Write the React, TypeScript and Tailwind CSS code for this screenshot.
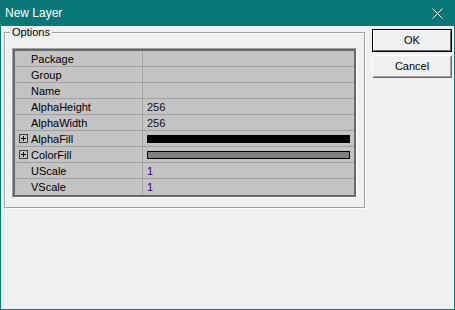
import React from "react";

type Row = { name: string; value?: string; kind?: "text" | "num" | "black" | "gray"; expand?: boolean };

const rows: Row[] = [
  { name: "Package" },
  { name: "Group" },
  { name: "Name" },
  { name: "AlphaHeight", value: "256", kind: "text" },
  { name: "AlphaWidth", value: "256", kind: "text" },
  { name: "AlphaFill", kind: "black", expand: true },
  { name: "ColorFill", kind: "gray", expand: true },
  { name: "UScale", value: "1", kind: "num" },
  { name: "VScale", value: "1", kind: "num" },
];

function PlusBox() {
  return (
    <svg width="9" height="9" viewBox="0 0 9 9" className="block">
      <rect x="0.5" y="0.5" width="8" height="8" fill="none" stroke="#3c3c3c" />
      <line x1="2" y1="4.5" x2="7" y2="4.5" stroke="#000" />
      <line x1="4.5" y1="2" x2="4.5" y2="7" stroke="#000" />
    </svg>
  );
}

export default function App() {
  const font = { fontFamily: '"Liberation Sans", Arial, sans-serif' };
  return (
    <div className="w-[455px] h-[310px] bg-[#077877] px-[1px] pb-[1px] flex flex-col" style={font}>
      <div className="h-[26px] flex items-center pl-[4px] shrink-0">
        <span className="text-white text-[12px] leading-[14px]">New Layer</span>
        <div className="ml-auto mr-[11px] flex items-center">
          <svg width="11" height="11" viewBox="0 0 11 11">
            <line x1="0.5" y1="0.5" x2="10.5" y2="10.5" stroke="#fff" strokeWidth="1" />
            <line x1="10.5" y1="0.5" x2="0.5" y2="10.5" stroke="#fff" strokeWidth="1" />
          </svg>
        </div>
      </div>
      <div className="flex-1 bg-[#f0f0f0] flex items-start pl-[3px]">
        <fieldset className="w-[361px] h-[182px] border border-[#a0a0a0] shadow-[1px_1px_0_#ffffff,inset_1px_1px_0_#ffffff] pl-[7px] pt-[9px] shrink-0">
          <legend className="ml-[-2px] px-[2px] text-[11px] leading-[13px] text-black bg-[#f0f0f0]">Options</legend>
          <div className="w-[345px] border border-t-[#a0a0a0] border-l-[#a0a0a0] border-b-white border-r-white">
            <div className="border-2 border-[#696969] bg-[#c4c4c4]">
              {rows.map((r, i) => (
                <div
                  key={r.name}
                  className={
                    "flex h-[16px] text-[11px] leading-[15px] " +
                    (i < rows.length - 1 ? "border-b border-[#a0a0a0]" : "")
                  }
                >
                  <div className="w-[128px] shrink-0 flex border-r border-[#a0a0a0]">
                    <div className="w-[16px] shrink-0 flex items-center justify-center">
                      {r.expand ? <PlusBox /> : null}
                    </div>
                    <span className="text-black pt-[1px]">{r.name}</span>
                  </div>
                  <div className="flex-1 flex items-center pl-[4px] pr-[4px]">
                    {r.kind === "text" && <span className="text-[#101020] pt-[1px]">{r.value}</span>}
                    {r.kind === "num" && <span className="text-[#400060] pt-[1px]">{r.value}</span>}
                    {r.kind === "black" && <div className="w-full h-[8px] bg-black" />}
                    {r.kind === "gray" && <div className="w-full h-[8px] bg-[#808080] border border-black" />}
                  </div>
                </div>
              ))}
            </div>
          </div>
        </fieldset>
        <div className="ml-[7px] mt-[3px] flex flex-col gap-[3px]">
          <button className="w-[80px] h-[23px] border border-black bg-[#f0f0f0] p-0">
            <div className="w-full h-full border border-t-white border-l-white border-b-[#696969] border-r-[#696969] flex items-center justify-center text-[11px] text-black">
              OK
            </div>
          </button>
          <button className="w-[80px] h-[23px] border border-t-white border-l-white border-b-[#696969] border-r-[#696969] bg-[#f0f0f0] p-0">
            <div className="w-full h-full border border-transparent border-b-[#a0a0a0] border-r-[#a0a0a0] flex items-center justify-center text-[11px] text-black">
              Cancel
            </div>
          </button>
        </div>
      </div>
    </div>
  );
}
